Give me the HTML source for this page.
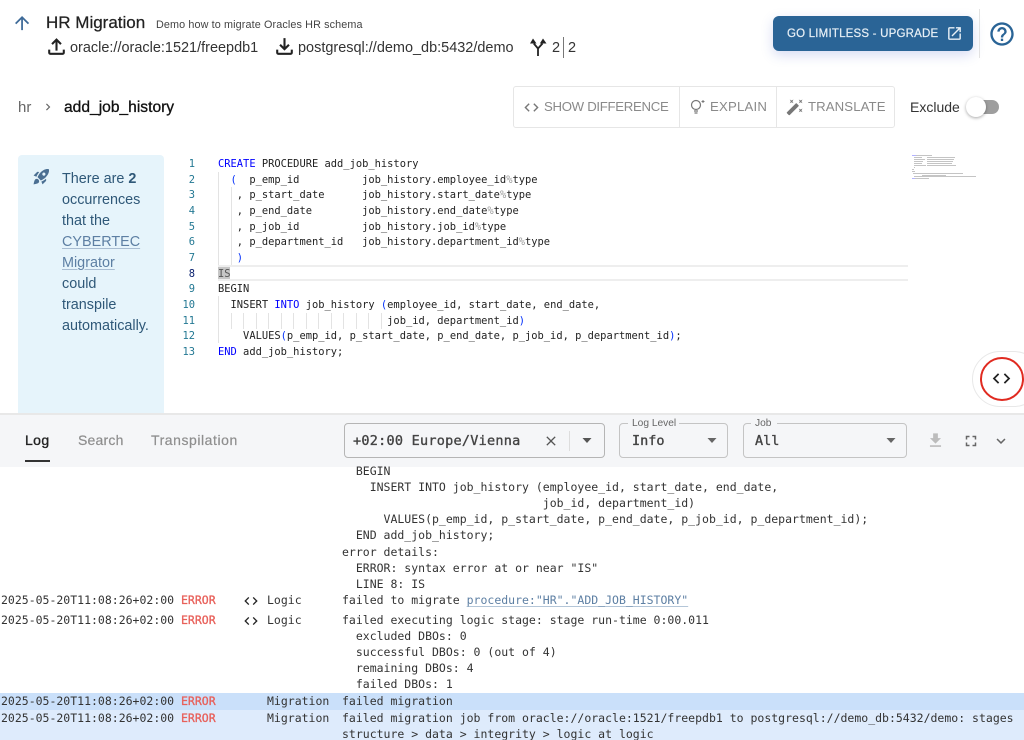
<!DOCTYPE html>
<html><head><meta charset="utf-8">
<style>
html,body{margin:0;padding:0;background:#fff}
#p{position:relative;width:1024px;height:740px;overflow:hidden;background:#fff;font-family:"Liberation Sans",sans-serif;color:#222}
.t{position:absolute;white-space:pre;margin:0}
.m{font-family:"DejaVu Sans Mono","Liberation Mono",monospace}
.b{position:absolute}
svg{position:absolute;display:block}
.c{font-size:10.42px;line-height:16px;height:16px;color:#222;left:218px}
.n{font-size:10.42px;line-height:16px;height:16px;color:#237893;left:170px;width:25px;text-align:right}
.k{color:#0000ff}.q{color:#0431fa}.g{color:#999}
.l{font-size:11.5px;line-height:16px;height:16px;color:#333;left:342px}
.ts{left:1px}.e{left:181px;color:#e8605a;-webkit-text-stroke:.3px #e8605a}.j{left:267px}
.ui{color:#8a8a8a;font-size:13.2px;line-height:18px;height:18px}
.sel{font-size:13.5px;line-height:19px;color:#444;-webkit-text-stroke:.35px #444;top:432px}
.gt{position:absolute;width:1px;height:16px;top:313px;background:#e3e3e3}
</style></head><body><div id="p">

<svg style="left:10px;top:11px" width="24" height="24" viewBox="0 0 24 24" fill="#3d6a98"><path d="M4 12l1.41 1.41L11 7.83V20h2V7.83l5.58 5.59L20 12l-8-8-8 8z" transform="translate(1.5 1.5) scale(.88)"/></svg>
<div class="t" style="left:46px;top:13px;font-size:17px;line-height:20px;color:#222;-webkit-text-stroke:.25px #222">HR Migration</div>
<div class="t" style="left:156px;top:18px;font-size:10.8px;line-height:14px;color:#444;letter-spacing:.12px">Demo how to migrate Oracles HR schema</div>
<svg style="left:44px;top:34px" width="25" height="25" viewBox="0 0 24 24" fill="#222"><path d="M18 15v3H6v-3H4v3c0 1.100.9 2 2 2h12c1.100 0 2-.9 2-2v-3h-2zM7 9l1.410 1.410L11 7.830V16h2V7.830l2.590 2.580L17 9l-5-5-5 5z"/></svg>
<div class="t" style="left:70px;top:39px;font-size:14.47px;line-height:18px;color:#333">oracle://oracle:1521/freepdb1</div>
<svg style="left:272px;top:34px" width="25" height="25" viewBox="0 0 24 24" fill="#222"><path d="M18 15v3H6v-3H4v3c0 1.100.9 2 2 2h12c1.100 0 2-.9 2-2v-3h-2zm-1-4l-1.410-1.410L13 12.170V4h-2v8.170L8.410 9.590 7 11l5 5 5-5z"/></svg>
<div class="t" style="left:298px;top:39px;font-size:14.47px;line-height:18px;color:#333">postgresql://demo_db:5432/demo</div>
<svg style="left:530px;top:37px" width="18" height="20" viewBox="0 0 18 20" fill="none" stroke="#222" stroke-width="1.800"><path d="M8 19V11.500L3.800 6.500M8 11.500L12.500 6.500"/><path d="M3 1.500L0 6.500H6.500zM13 1.500L9.800 6.500H16.500z" fill="#222" stroke="none"/></svg>
<div class="t" style="left:552px;top:39px;font-size:14.47px;line-height:18px;color:#333">2</div>
<div class="b" style="left:563px;top:37px;width:1px;height:21px;background:#777"></div>
<div class="t" style="left:568px;top:39px;font-size:14.47px;line-height:18px;color:#333">2</div>

<div class="b" style="left:773px;top:16px;width:200px;height:35px;background:#2a6496;border-radius:6px;box-shadow:0 4px 12px rgba(70,90,200,.22)"></div>
<div class="t" style="left:787px;top:27px;font-size:11.5px;line-height:15px;color:#e8f0f6;letter-spacing:.2px;-webkit-text-stroke:.2px #e8f0f6">GO LIMITLESS - UPGRADE</div>
<svg style="left:946px;top:25px" width="17" height="17" viewBox="0 0 24 24" fill="#e8f0f6"><path d="M19 19H5V5h7V3H5c-1.110 0-2 .9-2 2v14c0 1.100.89 2 2 2h14c1.100 0 2-.9 2-2v-7h-2v7zM14 3v2h3.590l-9.830 9.830 1.410 1.410L19 6.410V10h2V3h-7z"/></svg>
<div class="b" style="left:979px;top:9px;width:1px;height:49px;background:#e2e2e2"></div>
<svg style="left:988px;top:20px" width="28" height="28" viewBox="0 0 24 24" fill="#2a6496"><path d="M11 18h2v-2h-2v2zm1-16C6.480 2 2 6.480 2 12s4.480 10 10 10 10-4.480 10-10S17.520 2 12 2zm0 18c-4.410 0-8-3.590-8-8s3.590-8 8-8 8 3.590 8 8-3.590 8-8 8zm0-14c-2.210 0-4 1.790-4 4h2c0-1.100.9-2 2-2s2 .9 2 2c0 2-3 1.750-3 5h2c0-2.250 3-2.500 3-5 0-2.210-1.790-4-4-4z"/></svg>

<div class="t" style="left:18px;top:99px;font-size:15px;line-height:18px;color:#666">hr</div>
<svg style="left:41px;top:100px" width="14" height="14" viewBox="0 0 24 24" fill="#666"><path d="M8.590 16.590L13.170 12 8.590 7.410 10 6l6 6-6 6z"/></svg>
<div class="t" style="left:64px;top:99px;font-size:15.6px;line-height:18px;color:#111;-webkit-text-stroke:.3px #111">add_job_history</div>

<div class="b" style="left:513px;top:86px;width:380px;height:40px;border:1px solid #e6e6e6;border-radius:3px"></div>
<div class="b" style="left:679px;top:86px;width:1px;height:41px;background:#e6e6e6"></div>
<div class="b" style="left:776px;top:86px;width:1px;height:41px;background:#e6e6e6"></div>
<svg style="left:523px;top:99px" width="17" height="17" viewBox="0 0 24 24" fill="#777"><path d="M9.400 16.600L4.800 12l4.600-4.600L8 6l-6 6 6 6 1.400-1.400zm5.200 0l4.600-4.600-4.600-4.600L16 6l6 6-6 6-1.400-1.400z"/></svg>
<div class="t ui" style="left:544px;top:98px;letter-spacing:-.3px">SHOW DIFFERENCE</div>
<svg style="left:688px;top:97px" width="20" height="20" viewBox="0 0 20 20" fill="none" stroke="#777" stroke-width="1.200"><circle cx="8" cy="8" r="4.500"/><path d="M6 14h4M6.500 16h3"/><path d="M15 3v3M13.500 4.500h3" stroke-width="1"/></svg>
<div class="t ui" style="left:710px;top:98px;letter-spacing:.2px">EXPLAIN</div>
<svg style="left:786px;top:98px" width="18" height="18" viewBox="0 0 24 24" fill="#777"><path d="M7.500 5.600L10 7 8.600 4.500 10 2 7.500 3.400 5 2l1.400 2.500L5 7zm12 9.800L17 14l1.400 2.500L17 19l2.500-1.400L22 19l-1.400-2.500L22 14zM22 2l-2.500 1.400L17 2l1.400 2.500L17 7l2.500-1.400L22 7l-1.400-2.500zm-7.630 5.290c-.39-.39-1.020-.39-1.410 0L1.290 18.960c-.39.39-.39 1.020 0 1.410l2.340 2.340c.39.39 1.020.39 1.410 0L16.700 11.050c.39-.39.39-1.020 0-1.410l-2.330-2.350z"/></svg>
<div class="t ui" style="left:808px;top:98px;letter-spacing:.1px">TRANSLATE</div>
<div class="t" style="left:910px;top:98px;font-size:14px;line-height:18px;color:#333">Exclude</div>
<div class="b" style="left:972px;top:100px;width:27px;height:14px;border-radius:7px;background:#9e9e9e"></div>
<div class="b" style="left:966px;top:97px;width:20px;height:20px;border-radius:50%;background:#fff;box-shadow:0 1px 3px rgba(0,0,0,.35)"></div>

<div class="b" style="left:18px;top:155px;width:146px;height:258px;background:#e6f4fb;border-radius:4px 4px 0 0"></div>
<svg style="left:32px;top:167px" width="19" height="19" viewBox="0 0 24 24" fill="#4b6f92"><path d="M9.190 6.350c-2.040 2.290-3.440 5.580-3.570 5.890L2 10.690l4.050-4.050c.47-.47 1.150-.68 1.810-.55l1.330.26zM11.170 17s3.740-1.550 5.890-3.700c5.400-5.400 4.500-9.620 4.210-10.570-.95-.3-5.170-1.190-10.570 4.210C8.550 9.090 7 12.830 7 12.830L11.170 17zm6.480-2.190c-2.290 2.040-5.580 3.440-5.890 3.570L13.310 22l4.050-4.050c.47-.47.68-1.150.55-1.810l-.26-1.330zM9 18c0 .83-.34 1.580-.88 2.120C6.940 21.300 2 22 2 22s.7-4.940 1.880-6.120C4.420 15.340 5.170 15 6 15c1.660 0 3 1.340 3 3zm4-9c0-1.100.9-2 2-2s2 .9 2 2-.9 2-2 2-2-.9-2-2z"/></svg>
<div class="t" style="left:62px;top:169px;font-size:14.4px;line-height:21px;color:#2f5878">There are <b>2</b>
occurrences
that the
<span style="color:#5d7fa3;text-decoration:underline;text-decoration-color:#a9bdd2;text-underline-offset:2px">CYBERTEC</span>
<span style="color:#5d7fa3;text-decoration:underline;text-decoration-color:#a9bdd2;text-underline-offset:2px">Migrator</span>
could
transpile
automatically.</div>

<div class="b" style="left:218px;top:172px;width:1px;height:93px;background:#e3e3e3"></div>
<div class="b" style="left:231px;top:187px;width:1px;height:78px;background:#e3e3e3"></div>
<div class="b" style="left:218px;top:296px;width:1px;height:47px;background:#e3e3e3"></div>
<div class="gt" style="left:231px"></div><div class="gt" style="left:243px"></div><div class="gt" style="left:256px"></div><div class="gt" style="left:268px"></div><div class="gt" style="left:281px"></div><div class="gt" style="left:293px"></div><div class="gt" style="left:306px"></div><div class="gt" style="left:318px"></div><div class="gt" style="left:331px"></div><div class="gt" style="left:343px"></div><div class="gt" style="left:356px"></div><div class="gt" style="left:368px"></div><div class="gt" style="left:381px"></div>
<div class="b" style="left:218px;top:265px;width:690px;height:16px;box-sizing:border-box;border-top:2px solid #eee;border-bottom:2px solid #eee"></div>
<div class="b" style="left:218px;top:267px;width:12px;height:12px;background:#c6c6c6"></div>

<div class="t m n" style="top:156px">1</div>
<div class="t m n" style="top:172px">2</div>
<div class="t m n" style="top:187px">3</div>
<div class="t m n" style="top:203px">4</div>
<div class="t m n" style="top:219px">5</div>
<div class="t m n" style="top:234px">6</div>
<div class="t m n" style="top:250px">7</div>
<div class="t m n" style="top:266px;color:#0b216f">8</div>
<div class="t m n" style="top:281px">9</div>
<div class="t m n" style="top:297px">10</div>
<div class="t m n" style="top:313px">11</div>
<div class="t m n" style="top:328px">12</div>
<div class="t m n" style="top:344px">13</div>

<div class="t m c" style="top:156px"><span class="k">CREATE</span> PROCEDURE add_job_history</div>
<div class="t m c" style="top:172px">  <span class="q">(</span>  p_emp_id          job_history.employee_id<span class="g">%</span>type</div>
<div class="t m c" style="top:187px">   , p_start_date      job_history.start_date<span class="g">%</span>type</div>
<div class="t m c" style="top:203px">   , p_end_date        job_history.end_date<span class="g">%</span>type</div>
<div class="t m c" style="top:219px">   , p_job_id          job_history.job_id<span class="g">%</span>type</div>
<div class="t m c" style="top:234px">   , p_department_id   job_history.department_id<span class="g">%</span>type</div>
<div class="t m c" style="top:250px">   <span class="q">)</span></div>
<div class="t m c" style="top:266px;color:#555">IS</div>
<div class="t m c" style="top:281px">BEGIN</div>
<div class="t m c" style="top:297px">  INSERT <span class="k">INTO</span> job_history <span class="q">(</span>employee_id, start_date, end_date,</div>
<div class="t m c" style="top:313px">                           job_id, department_id<span class="q">)</span></div>
<div class="t m c" style="top:328px">    VALUES<span class="q">(</span>p_emp_id, p_start_date, p_end_date, p_job_id, p_department_id<span class="q">)</span>;</div>
<div class="t m c" style="top:344px"><span class="k">END</span> add_job_history;</div>

<svg style="left:912px;top:155px" width="64" height="24" fill="#8a8a8a" opacity=".5">
<rect x="0" y="0" width="4" height="1" fill="#6a6aff"/><rect x="4" y="0" width="16" height="1"/>
<rect x="2" y="2" width="8" height="1"/><rect x="15" y="2" width="28" height="1"/>
<rect x="2" y="4" width="11" height="1"/><rect x="15" y="4" width="27" height="1"/>
<rect x="2" y="6" width="9" height="1"/><rect x="15" y="6" width="26" height="1"/>
<rect x="2" y="8" width="8" height="1"/><rect x="15" y="8" width="25" height="1"/>
<rect x="2" y="10" width="12" height="1"/><rect x="15" y="10" width="29" height="1"/>
<rect x="2" y="12" width="1" height="1"/><rect x="0" y="14" width="2" height="1"/><rect x="0" y="16" width="3" height="1"/>
<rect x="1" y="18" width="50" height="1"/><rect x="10" y="20" width="24" height="1"/><rect x="2" y="21" width="62" height="1"/>
<rect x="0" y="23" width="3" height="1" fill="#6a6aff"/><rect x="3" y="23" width="14" height="1"/>
</svg>

<div class="b" style="left:972px;top:351px;width:70px;height:56px;background:#fff;border:1px solid #e8e8e8;border-radius:29px;box-sizing:border-box"></div>
<div class="b" style="left:980px;top:357px;width:44px;height:44px;box-sizing:border-box;border:2.200px solid #e02a20;border-radius:50%"></div>
<svg style="left:991px;top:368px" width="21" height="21" viewBox="0 0 24 24" fill="#222"><path d="M9.400 16.600L4.800 12l4.600-4.600L8 6l-6 6 6 6 1.400-1.400zm5.200 0l4.600-4.600-4.600-4.600L16 6l6 6-6 6-1.400-1.400z"/></svg>

<div class="b" style="left:0;top:413px;width:1024px;height:2px;background:#e8e8e8"></div>
<div class="b" style="left:0;top:415px;width:1024px;height:52px;background:#f5f6f8"></div>
<div class="t" style="left:25px;top:431px;font-size:14px;line-height:18px;color:#222;-webkit-text-stroke:.35px #222;letter-spacing:.4px">Log</div>
<div class="t" style="left:78px;top:431px;font-size:14px;line-height:18px;color:#8e8e8e;letter-spacing:.2px;-webkit-text-stroke:.2px #8e8e8e">Search</div>
<div class="t" style="left:151px;top:431px;font-size:14px;line-height:18px;color:#8e8e8e;letter-spacing:.55px;-webkit-text-stroke:.2px #8e8e8e">Transpilation</div>
<div class="b" style="left:25px;top:460px;width:25px;height:2px;background:#333"></div>

<div class="b" style="left:344px;top:423px;width:261px;height:35px;box-sizing:border-box;border:1px solid #b5b5b5;border-radius:4px"></div>
<div class="t m sel" style="left:353px;letter-spacing:.25px">+02:00 Europe/Vienna</div>
<svg style="left:543px;top:433px" width="16" height="16" viewBox="0 0 24 24" fill="#555"><path d="M19 6.410L17.590 5 12 10.590 6.410 5 5 6.410 10.590 12 5 17.590 6.410 19 12 13.410 17.590 19 19 17.590 13.410 12z"/></svg>
<div class="b" style="left:569px;top:431px;width:1px;height:20px;background:#ddd"></div>
<svg style="left:581px;top:438px" width="12" height="6" fill="#555"><path d="M1.500 0h9L6 5z"/></svg>

<div class="b" style="left:619px;top:423px;width:109px;height:35px;box-sizing:border-box;border:1px solid #c4c4c4;border-radius:4px"></div>
<div class="b" style="left:628px;top:420px;width:51px;height:6px;background:#f5f6f8"></div>
<div class="t" style="left:632px;top:417px;font-size:10.2px;line-height:13px;color:#666">Log Level</div>
<div class="t m sel" style="left:632px">Info</div>
<svg style="left:706px;top:438px" width="12" height="6" fill="#666"><path d="M1.500 0h9L6 5z"/></svg>

<div class="b" style="left:743px;top:423px;width:164px;height:35px;box-sizing:border-box;border:1px solid #c4c4c4;border-radius:4px"></div>
<div class="b" style="left:751px;top:420px;width:26px;height:6px;background:#f5f6f8"></div>
<div class="t" style="left:755px;top:417px;font-size:10.2px;line-height:13px;color:#666">Job</div>
<div class="t m sel" style="left:755px">All</div>
<svg style="left:885px;top:438px" width="12" height="6" fill="#666"><path d="M1.500 0h9L6 5z"/></svg>

<svg style="left:926px;top:431px" width="19" height="19" viewBox="0 0 24 24" fill="#bcbcbc"><path d="M5 20h14v-2H5v2zM19 9h-4V3H9v6H5l7 7 7-7z"/></svg>
<svg style="left:962px;top:432px" width="18" height="18" viewBox="0 0 24 24" fill="#666"><path d="M7 14H5v5h5v-2H7v-3zm-2-4h2V7h3V5H5v5zm12 7h-3v2h5v-5h-2v3zM14 5v2h3v3h2V5h-5z"/></svg>
<svg style="left:992px;top:432px" width="18" height="18" viewBox="0 0 24 24" fill="#666"><path d="M16.590 8.590L12 13.170 7.410 8.590 6 10l6 6 6-6z"/></svg>

<div class="t m l" style="top:463px">  BEGIN</div>
<div class="t m l" style="top:479px">    INSERT INTO job_history (employee_id, start_date, end_date,</div>
<div class="t m l" style="top:495px">                             job_id, department_id)</div>
<div class="t m l" style="top:511px">      VALUES(p_emp_id, p_start_date, p_end_date, p_job_id, p_department_id);</div>
<div class="t m l" style="top:527px">  END add_job_history;</div>
<div class="t m l" style="top:544px">error details:</div>
<div class="t m l" style="top:560px">  ERROR: syntax error at or near "IS"</div>
<div class="t m l" style="top:576px">  LINE 8: IS</div>

<div class="t m l ts" style="top:592px">2025-05-20T11:08:26+02:00</div>
<div class="t m l e" style="top:592px">ERROR</div>
<svg style="left:243px;top:593px" width="16" height="16" viewBox="0 0 24 24" fill="#222"><path d="M9.400 16.600L4.800 12l4.600-4.600L8 6l-6 6 6 6 1.400-1.400zm5.200 0l4.600-4.600-4.600-4.600L16 6l6 6-6 6-1.400-1.400z"/></svg>
<div class="t m l j" style="top:592px">Logic</div>
<div class="t m l" style="top:592px">failed to migrate <span style="color:#5d7fa3;text-decoration:underline;text-decoration-color:#b4c6d8;text-underline-offset:2px">procedure:"HR"."ADD_JOB_HISTORY"</span></div>

<div class="t m l ts" style="top:612px">2025-05-20T11:08:26+02:00</div>
<div class="t m l e" style="top:612px">ERROR</div>
<svg style="left:243px;top:613px" width="16" height="16" viewBox="0 0 24 24" fill="#222"><path d="M9.400 16.600L4.800 12l4.600-4.600L8 6l-6 6 6 6 1.400-1.400zm5.200 0l4.600-4.600-4.600-4.600L16 6l6 6-6 6-1.400-1.400z"/></svg>
<div class="t m l j" style="top:612px">Logic</div>
<div class="t m l" style="top:612px">failed executing logic stage: stage run-time 0:00.011</div>
<div class="t m l" style="top:628px">  excluded DBOs: 0</div>
<div class="t m l" style="top:644px">  successful DBOs: 0 (out of 4)</div>
<div class="t m l" style="top:660px">  remaining DBOs: 4</div>
<div class="t m l" style="top:676px">  failed DBOs: 1</div>

<div class="b" style="left:0;top:693px;width:1024px;height:17px;background:#cae0fa"></div>
<div class="b" style="left:0;top:710px;width:1024px;height:30px;background:#deebfc"></div>
<div class="t m l ts" style="top:693px">2025-05-20T11:08:26+02:00</div>
<div class="t m l e" style="top:693px">ERROR</div>
<div class="t m l j" style="top:693px">Migration</div>
<div class="t m l" style="top:693px">failed migration</div>
<div class="t m l ts" style="top:710px">2025-05-20T11:08:26+02:00</div>
<div class="t m l e" style="top:710px">ERROR</div>
<div class="t m l j" style="top:710px">Migration</div>
<div class="t m l" style="top:710px">failed migration job from oracle://oracle:1521/freepdb1 to postgresql://demo_db:5432/demo: stages</div>
<div class="t m l" style="top:726px">structure &gt; data &gt; integrity &gt; logic at logic</div>

</div></body></html>
